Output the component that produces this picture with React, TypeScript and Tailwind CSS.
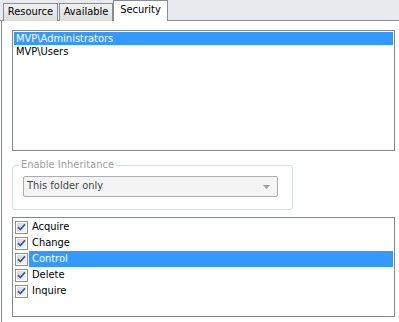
import React from "react";

const font = { fontFamily: '"DejaVu Sans Condensed", "Liberation Sans", Tahoma, sans-serif' };

function Check() {
  return (
    <svg width="13" height="13" viewBox="0 0 13 13" className="shrink-0">
      <defs>
        <linearGradient id="cbg" x1="0" y1="0" x2="1" y2="1">
          <stop offset="0" stopColor="#d6d6d6" />
          <stop offset="1" stopColor="#f6f6f6" />
        </linearGradient>
      </defs>
      <rect x="0.5" y="0.5" width="12" height="12" fill="#fff" stroke="#8e8f8f" />
      <rect x="2" y="2" width="9" height="9" fill="url(#cbg)" />
      <path d="M3 6.2 L5.3 8.6 L10 3.2" fill="none" stroke="#3d52a8" strokeWidth="1.7" />
    </svg>
  );
}

export default function App() {
  const perms = ["Acquire", "Change", "Control", "Delete", "Inquire"];
  return (
    <div className="w-[399px] h-[322px] bg-white overflow-hidden text-[11px] text-black" style={font}>
      <div className="h-[21px] bg-[#e9eaee] border-b border-[#898c95] flex items-end pl-[3px]">
        <div className="h-[18px] -mb-px w-[55px] flex items-center justify-center border border-b-0 border-[#898c95] bg-gradient-to-b from-[#f2f2f2] to-[#dcdcdc]">
          Resource
        </div>
        <div className="h-[18px] -mb-px w-[54px] ml-[1px] flex items-center justify-center border border-b-0 border-[#898c95] bg-gradient-to-b from-[#f2f2f2] to-[#dcdcdc]">
          Available
        </div>
        <div className="h-[21px] -mb-px w-[55px] flex items-center justify-center border border-b-0 border-[#898c95] bg-white pb-[2px]">
          Security
        </div>
      </div>
      <div className="ml-[1px] border-l border-[#898c95] h-[301px] pl-[10px] pt-[9px] flex flex-col">
        <div className="w-[383px] h-[121px] border border-[#828790] pt-[1px] px-[1px]">
          <div className="h-[13px] bg-[#3399ff] text-white pl-[2px] leading-[13px]">MVP\Administrators</div>
          <div className="h-[13px] pl-[2px] leading-[13px]">MVP\Users</div>
        </div>
        <div className="relative mt-[14px] w-[281px] h-[45px] border border-[#d5dfe5] rounded-[3px]">
          <div className="absolute -top-[8px] left-[6px] bg-white px-[2px] text-[#a0a0a0] leading-[14px]">
            Enable Inheritance
          </div>
          <div className="absolute left-[10px] top-[10px] w-[255px] h-[21px] border border-[#adadad] rounded-[2px] bg-[#f4f4f4] flex items-center pl-[3px] text-[#444]">
            <span className="flex-1">This folder only</span>
            <svg width="7" height="4" viewBox="0 0 7 4" className="mr-[7px]">
              <path d="M0 0 H7 L3.5 4 Z" fill="#a0a0a0" />
            </svg>
          </div>
        </div>
        <div className="mt-[7px] w-[383px] h-[100px] border border-[#828790] pt-[1px] pl-[2px] pr-[1px]">
          {perms.map((p) => (
            <div key={p} className="h-[16px] flex items-center">
              <Check />
              <div
                className={
                  "flex-1 h-[16px] ml-[1px] pl-[3px] leading-[16px] " +
                  (p === "Control" ? "bg-[#3399ff] text-white" : "")
                }
              >
                {p}
              </div>
            </div>
          ))}
        </div>
      </div>
    </div>
  );
}
